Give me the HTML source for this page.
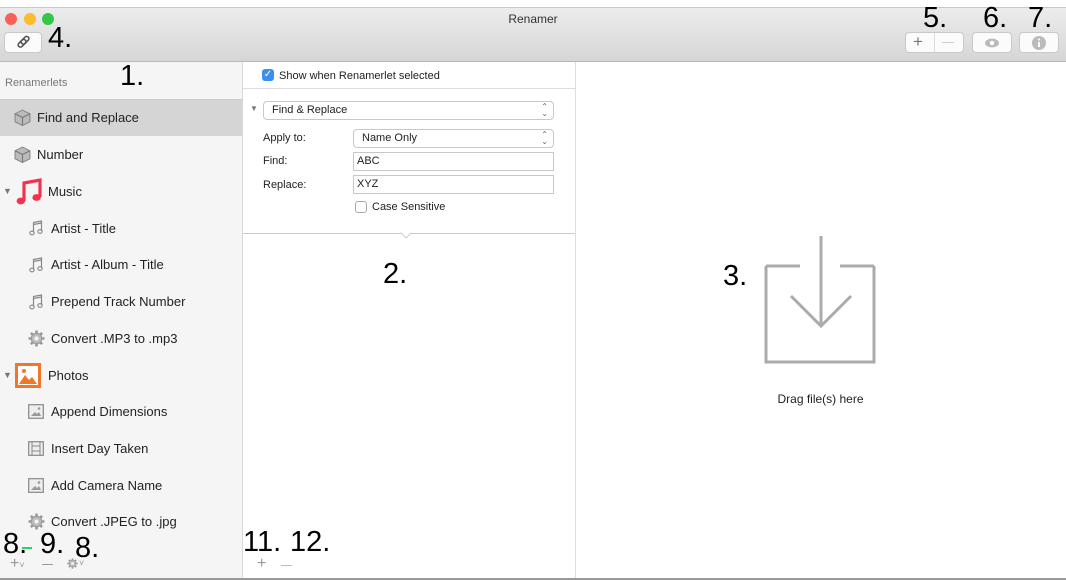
<!DOCTYPE html>
<html><head><style>
*{margin:0;padding:0;box-sizing:border-box}
body{width:1066px;height:580px;background:#fff;font-family:"Liberation Sans",sans-serif;position:relative;overflow:hidden;color:#222}
.abs{position:absolute}
.tb{left:0;top:7px;width:1066px;height:55px;background:linear-gradient(#ececec,#d6d6d6);border-top:1px solid #c8c8c8;border-bottom:1px solid #b8b8b8}
.dot{width:12px;height:12px;border-radius:50%;top:13px}
.btn{background:#fbfbfb;border:1px solid #c9c9c9;border-radius:4px;height:21px}
.big{font-size:29px;color:#000}
.side{left:0;top:62px;width:243px;height:516px;background:#f5f5f5;border-right:1px solid #d8d8d8}
.row{position:absolute;left:0;width:242px;height:37px;font-size:13px;line-height:37px}
.sel{background:#d5d5d5}
.lbl{font-size:11px}
.in{position:absolute;border:1px solid #c8c8c8;background:#fff;font-size:11px;line-height:17px;padding-left:3px;height:19px}
.pop{position:absolute;border:1px solid #c8c8c8;border-radius:4px;background:#fff;font-size:11px;line-height:17px;padding-left:8px;height:19px}
.ud{position:absolute;right:5px;top:1px;font-size:8px;line-height:7px;color:#666}
</style></head><body>
<svg width="0" height="0" style="position:absolute"><defs>
<symbol id="note" viewBox="0 0 14 16"><path d="M4.5 12.5V2.5L12.5 1V11M4.5 4.5L12.5 3" fill="none" stroke="#888" stroke-width="1.2"/><ellipse cx="3" cy="13" rx="2.2" ry="1.8" fill="none" stroke="#888" stroke-width="1.1"/><ellipse cx="11" cy="11.5" rx="2.2" ry="1.8" fill="none" stroke="#888" stroke-width="1.1"/></symbol>
<symbol id="gear" viewBox="0 0 16 16"><circle cx="8" cy="8" r="5" fill="#bbb" stroke="#999" stroke-width="1"/><circle cx="8" cy="8" r="2" fill="#f5f5f5"/><g stroke="#999" stroke-width="2.4"><path d="M8 0.5V3M8 13V15.5M0.5 8H3M13 8H15.5M2.7 2.7L4.4 4.4M11.6 11.6L13.3 13.3M2.7 13.3L4.4 11.6M11.6 4.4L13.3 2.7"/></g></symbol>
<symbol id="pic" viewBox="0 0 16 15"><rect x="0.7" y="0.7" width="14.6" height="13.6" fill="#eee" stroke="#888" stroke-width="1.2"/><path d="M3 12L7 8L9 10L11 8L13 12Z" fill="#999"/><circle cx="11" cy="4.5" r="1.3" fill="#999"/></symbol>
<symbol id="cube" viewBox="0 0 16 16"><path d="M8 1L15 4.5V12L8 15.5L1 12V4.5Z" fill="#bbb" stroke="#888"/><path d="M1 4.5L8 8L15 4.5M8 8V15.5" fill="none" stroke="#777"/></symbol>
</defs></svg>
<div class="abs tb"></div>
<div class="abs dot" style="left:5px;background:#fc5f57"></div>
<div class="abs dot" style="left:24px;background:#fdbc2e"></div>
<div class="abs dot" style="left:42px;background:#33c748"></div>
<div class="abs" style="left:0;top:12px;width:1066px;text-align:center;font-size:12px;color:#333">Renamer</div>
<div class="abs btn" style="left:4px;top:32px;width:38px"><svg width="36" height="19" viewBox="0 0 36 19"><g fill="none" stroke="#555" stroke-width="1.6"><rect x="12.5" y="8" width="9" height="4.5" rx="2.2" transform="rotate(-45 17 10.2)"/><rect x="15.5" y="5" width="9" height="4.5" rx="2.2" transform="rotate(-45 20 7.2)"/></g></svg></div>
<div class="abs big" style="left:48px;top:22px">4.</div>
<div class="abs big" style="left:923px;top:2px">5.</div>
<div class="abs big" style="left:983px;top:2px">6.</div>
<div class="abs big" style="left:1028px;top:2px">7.</div>
<div class="abs btn" style="left:905px;top:32px;width:59px"></div>
<div class="abs" style="left:934px;top:33px;width:1px;height:19px;background:#ddd"></div>
<div class="abs" style="left:913px;top:32px;font-size:17px;color:#777">+</div>
<div class="abs" style="left:942px;top:42px;width:12px;height:1px;background:#ccc"></div>
<div class="abs btn" style="left:972px;top:32px;width:40px"><svg width="38" height="19"><ellipse cx="19" cy="10" rx="7" ry="4.5" fill="#bbb"/><circle cx="19" cy="10" r="2.2" fill="#fff"/></svg></div>
<div class="abs btn" style="left:1019px;top:32px;width:40px"><svg width="38" height="19"><circle cx="19" cy="10" r="7" fill="#bbb"/><rect x="18" y="9" width="2" height="5" fill="#fff"/><circle cx="19" cy="6.5" r="1.1" fill="#fff"/></svg></div>

<div class="abs side"></div>
<div class="abs" style="left:5px;top:77px;font-size:11px;color:#777">Renamerlets</div>
<div class="abs big" style="left:120px;top:60px">1.</div>
<div class="row sel" style="top:99px"></div>
<div class="abs" style="top:99px;left:0;width:243px;height:1px;background:#ccc"></div>
<div style="position:absolute;left:0;top:99px;font-size:13px">
<div class="row" style="top:0;padding-left:37px">Find and Replace</div>
<div class="row" style="top:37px;padding-left:37px">Number</div>
<div class="row" style="top:74px;padding-left:48px">Music</div>
<div class="row" style="top:111px;padding-left:51px">Artist - Title</div>
<div class="row" style="top:147px;padding-left:51px">Artist - Album - Title</div>
<div class="row" style="top:184px;padding-left:51px">Prepend Track Number</div>
<div class="row" style="top:221px;padding-left:51px">Convert .MP3 to .mp3</div>
<div class="row" style="top:258px;padding-left:48px">Photos</div>
<div class="row" style="top:294px;padding-left:51px">Append Dimensions</div>
<div class="row" style="top:331px;padding-left:51px">Insert Day Taken</div>
<div class="row" style="top:368px;padding-left:51px">Add Camera Name</div>
<div class="row" style="top:404px;padding-left:51px">Convert .JPEG to .jpg</div>
</div>
<svg class="abs" style="left:14px;top:109px" width="17" height="17"><use href="#cube"/></svg>
<svg class="abs" style="left:14px;top:146px" width="17" height="17"><use href="#cube"/></svg>
<div class="abs" style="left:3px;top:186px;font-size:9px;color:#777">▼</div>
<svg class="abs" style="left:16px;top:178px" width="26" height="28" viewBox="0 0 26 28"><path d="M8 23V5L24 2V19" fill="none" stroke="#f0344d" stroke-width="3.2"/><ellipse cx="4.8" cy="23" rx="4.2" ry="3.4" fill="#f0344d"/><ellipse cx="20.6" cy="19.5" rx="4.2" ry="3.4" fill="#f0344d"/></svg>
<svg class="abs" style="left:29px;top:220px" width="14" height="16"><use href="#note"/></svg>
<svg class="abs" style="left:29px;top:257px" width="14" height="16"><use href="#note"/></svg>
<svg class="abs" style="left:29px;top:294px" width="14" height="16"><use href="#note"/></svg>
<svg class="abs" style="left:28px;top:330px" width="17" height="17"><use href="#gear"/></svg>
<div class="abs" style="left:3px;top:370px;font-size:9px;color:#777">▼</div>
<svg class="abs" style="left:15px;top:363px" width="26" height="25"><rect width="26" height="25" fill="#f0772a"/><rect x="3" y="3" width="20" height="19" fill="#fff"/><path d="M4 21L10 12L14 17L17 14L22 21Z" fill="#f0772a"/><circle cx="9" cy="8" r="2" fill="#f0772a"/></svg>
<svg class="abs" style="left:28px;top:404px" width="16" height="15"><use href="#pic"/></svg>
<svg class="abs" style="left:28px;top:441px" width="16" height="15"><rect x="0.7" y="0.7" width="14.6" height="13.6" fill="#eee" stroke="#888" stroke-width="1.2"/><path d="M4 1V14M12 1V14M4 5H12M4 10H12" stroke="#888" fill="none"/></svg>
<svg class="abs" style="left:28px;top:478px" width="16" height="15"><use href="#pic"/></svg>
<svg class="abs" style="left:28px;top:513px" width="17" height="17"><use href="#gear"/></svg>
<div class="abs big" style="left:3px;top:528px">8.</div>
<div class="abs big" style="left:40px;top:528px">9.</div>
<div class="abs big" style="left:75px;top:532px">8.</div>
<div class="abs" style="left:22px;top:547px;width:10px;height:2px;background:#2ad36b"></div>
<div class="abs" style="left:10px;top:555px;font-size:16px;color:#999">+<span style="font-size:9px">˅</span></div>
<div class="abs" style="left:42px;top:564px;width:11px;height:1px;background:#999"></div>
<svg class="abs" style="left:67px;top:558px" width="11" height="11"><use href="#gear"/></svg>
<div class="abs" style="left:79px;top:558px;font-size:9px;color:#999">˅</div>

<div class="abs" style="left:243px;top:88px;width:332px;height:1px;background:#ddd"></div>
<div class="abs" style="left:262px;top:69px;width:12px;height:12px;background:#3b8ff2;border-radius:3px;color:#fff;font-size:10px;line-height:12px;text-align:center">✓</div>
<div class="abs" style="left:279px;top:70px;font-size:11px">Show when Renamerlet selected</div>
<div class="abs" style="left:250px;top:104px;font-size:8px;color:#777">▼</div>
<div class="pop" style="left:263px;top:101px;width:291px">Find &amp; Replace<div class="ud">⌃<br>⌄</div></div>
<div class="abs lbl" style="left:263px;top:132px">Apply to:</div>
<div class="pop" style="left:353px;top:129px;width:201px">Name Only<div class="ud">⌃<br>⌄</div></div>
<div class="abs lbl" style="left:263px;top:155px">Find:</div>
<div class="in" style="left:353px;top:152px;width:201px">ABC</div>
<div class="abs lbl" style="left:263px;top:179px">Replace:</div>
<div class="in" style="left:353px;top:175px;width:201px">XYZ</div>
<div class="abs" style="left:355px;top:201px;width:12px;height:12px;border:1px solid #aaa;border-radius:3px"></div>
<div class="abs lbl" style="left:372px;top:201px">Case Sensitive</div>
<div class="abs" style="left:243px;top:233px;width:332px;height:1px;background:#ccc"></div>
<div class="abs" style="left:402px;top:229px;width:8px;height:8px;background:#fff;border-right:1px solid #ccc;border-bottom:1px solid #ccc;transform:rotate(45deg)"></div>
<div class="abs big" style="left:383px;top:258px">2.</div>
<div class="abs big" style="left:243px;top:526px">11.</div>
<div class="abs big" style="left:290px;top:526px">12.</div>
<div class="abs" style="left:257px;top:555px;font-size:16px;color:#999">+</div>
<div class="abs" style="left:281px;top:565px;width:11px;height:1px;background:#bbb"></div>
<div class="abs" style="left:575px;top:62px;width:1px;height:516px;background:#ddd"></div>
<div class="abs big" style="left:723px;top:260px">3.</div>
<svg class="abs" style="left:764px;top:234px" width="114" height="132"><path d="M2 32V128H110V32M2 32H36M110 32H76" fill="none" stroke="#ababab" stroke-width="3"/><path d="M57 2V92M27 62L57 92L87 62" fill="none" stroke="#ababab" stroke-width="3"/></svg>
<div class="abs" style="left:575px;top:392px;width:491px;text-align:center;font-size:12px">Drag file(s) here</div>
<div class="abs" style="left:0;top:578px;width:1066px;height:2px;background:#999"></div>
</body></html>
